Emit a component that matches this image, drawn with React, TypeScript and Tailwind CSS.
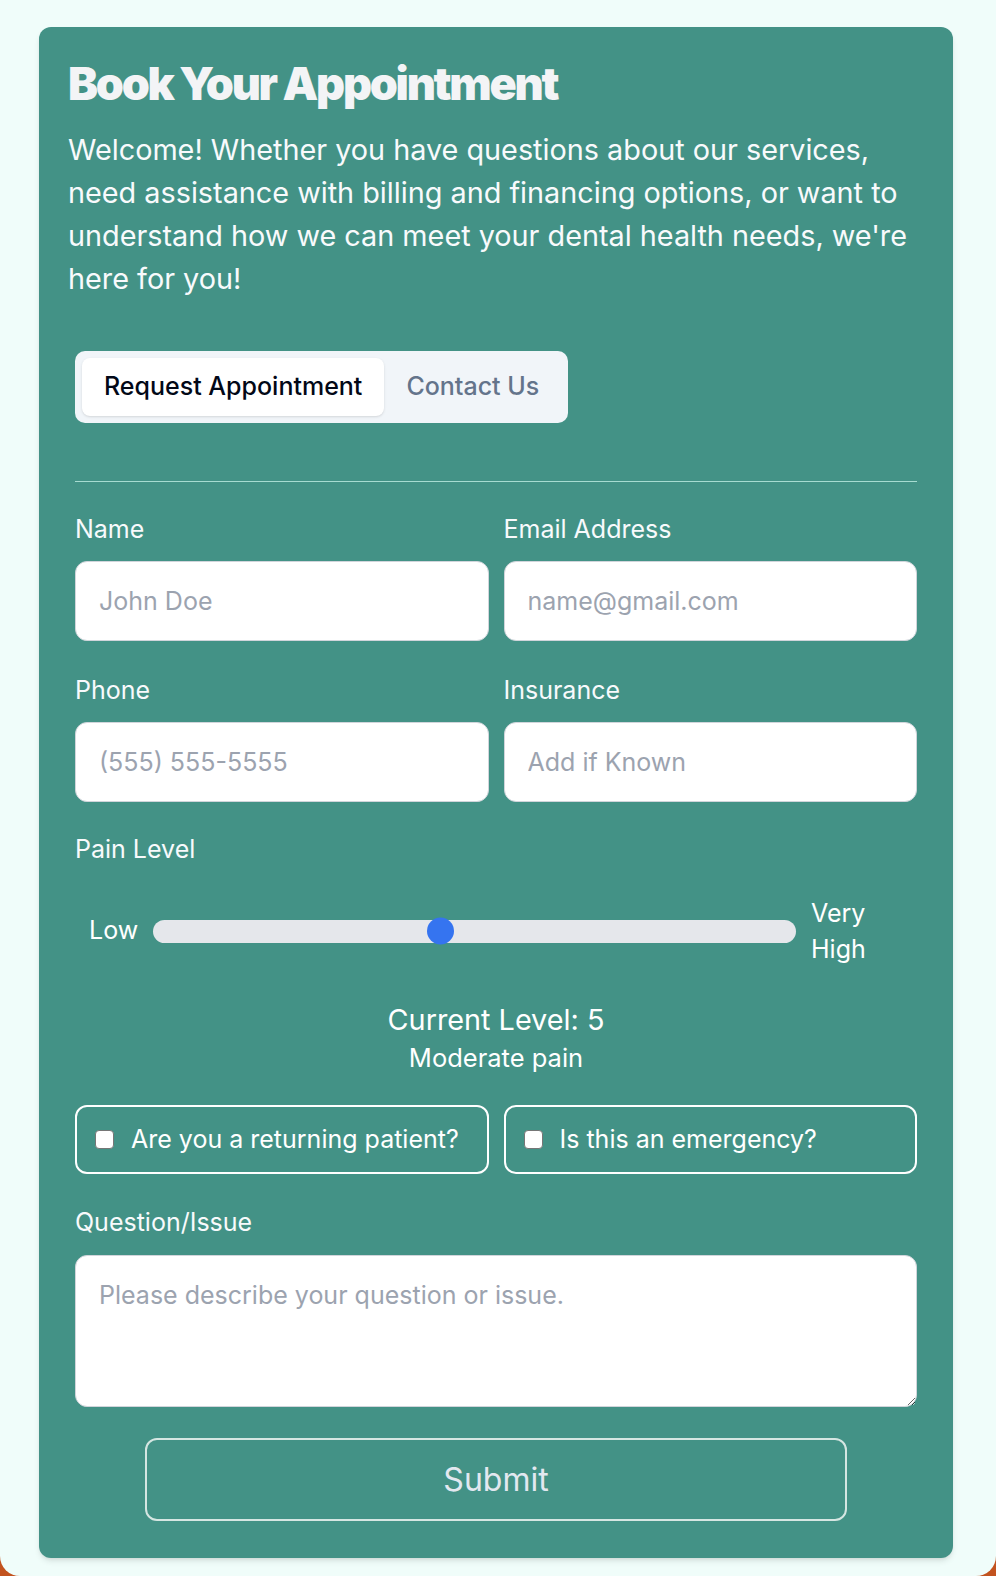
import { useState } from "react";

const labelClass = "block text-[25px] leading-[32px] text-[#f8fafc]";
const inputClass =
  "mt-[16px] block h-[80px] w-full rounded-[12px] border border-[#d1d5db] bg-white px-[23px] text-[25px] text-slate-900 outline-none placeholder:text-[#9ca3af]";

function Field({ label, placeholder, type = "text" }: { label: string; placeholder: string; type?: string }) {
  return (
    <div>
      <label className={labelClass}>{label}</label>
      <input type={type} placeholder={placeholder} className={inputClass} />
    </div>
  );
}

function CheckField({ label }: { label: string }) {
  return (
    <label className="flex h-[69px] items-center gap-[17px] rounded-[12px] border-2 border-white px-[18px] text-[25px] text-white">
      <input
        type="checkbox"
        className="h-[19px] w-[19px] shrink-0 appearance-none rounded-[4px] border border-[#767676] bg-white"
      />
      {label}
    </label>
  );
}

export default function App() {
  const [level] = useState(5);
  const pct = ((level - 1) / 9) * 100;

  return (
    <div className="h-[1576px] bg-[#c2531f]" style={{ fontFamily: "Inter, 'Noto Sans', sans-serif" }}>
      <div className="h-[1576px] w-full rounded-b-[20px] bg-[#f0fdfa] pt-[27px] pr-[43px] pl-[39px]">
        <div className="rounded-[12px] bg-[#439286] px-[29px] pt-[30px] pb-[37px] shadow-md">
          <h1 className="text-[45px] leading-[54px] font-black tracking-tighter text-[#f3f4f6]">
            Book Your Appointment
          </h1>
          <p className="mt-[17px] text-[28.8px] leading-[43px] text-[#f8fafc]">
            Welcome! Whether you have questions about our services, need assistance with billing and financing
            options, or want to understand how we can meet your dental health needs, we're here for you!
          </p>

          <div className="mt-[51px] px-[7px]">
            <div className="inline-flex h-[72px] items-center rounded-[10px] bg-[#f1f5f9] p-[7px]">
              <button className="h-[58px] rounded-[8px] bg-white px-[22px] text-[25px] font-medium text-[#020817] shadow-sm">
                Request Appointment
              </button>
              <button className="h-[58px] px-[22px] text-[25px] font-medium text-[#64748b]">Contact Us</button>
            </div>

            <div className="mt-[58px] h-px bg-[#a7dcd1]" />

            <form className="mt-[31px]">
              <div className="grid grid-cols-2 gap-x-[15px] gap-y-[33px]">
                <Field label="Name" placeholder="John Doe" />
                <Field label="Email Address" placeholder="name@gmail.com" type="email" />
                <Field label="Phone" placeholder="(555) 555-5555" type="tel" />
                <Field label="Insurance" placeholder="Add if Known" />
              </div>

              <div className="mt-[31px]">
                <label className={labelClass}>Pain Level</label>
                <div className="mt-[30px] flex items-center gap-[15px] px-[14px] text-[25px] text-white">
                  <span>Low</span>
                  <div className="relative h-[23px] flex-1 rounded-full bg-[#e5e7eb]">
                    <div
                      className="absolute top-1/2 h-[27px] w-[27px] -translate-y-1/2 rounded-full bg-[#3574f0]"
                      style={{ left: `calc(${pct}% - ${(pct / 100) * 27}px)` }}
                    />
                  </div>
                  <span className="w-[92px] leading-[36px]">Very High</span>
                </div>
                <div className="mt-[35px] text-center text-[28.8px] leading-[36px] text-white">
                  Current Level: {level}
                </div>
                <div className="mt-[4px] text-center text-[25.5px] leading-[32px] text-white">Moderate pain</div>
              </div>

              <div className="mt-[31px] grid grid-cols-2 gap-[15px]">
                <CheckField label="Are you a returning patient?" />
                <CheckField label="Is this an emergency?" />
              </div>

              <div className="mt-[32px]">
                <label className={labelClass}>Question/Issue</label>
                <textarea
                  placeholder="Please describe your question or issue."
                  className="mt-[17px] block h-[152px] w-full rounded-[12px] border border-[#d1d5db] bg-white px-[23px] pt-[23px] pb-[17px] text-[25px] leading-[32px] text-slate-900 outline-none placeholder:text-[#9ca3af]"
                />
              </div>

              <button
                type="submit"
                className="mx-auto mt-[31px] block h-[83px] w-5/6 rounded-[12px] border-2 border-[#d5e6e2] text-[32px] text-[#e2e8f0]"
              >
                Submit
              </button>
            </form>
          </div>
        </div>
      </div>
    </div>
  );
}
